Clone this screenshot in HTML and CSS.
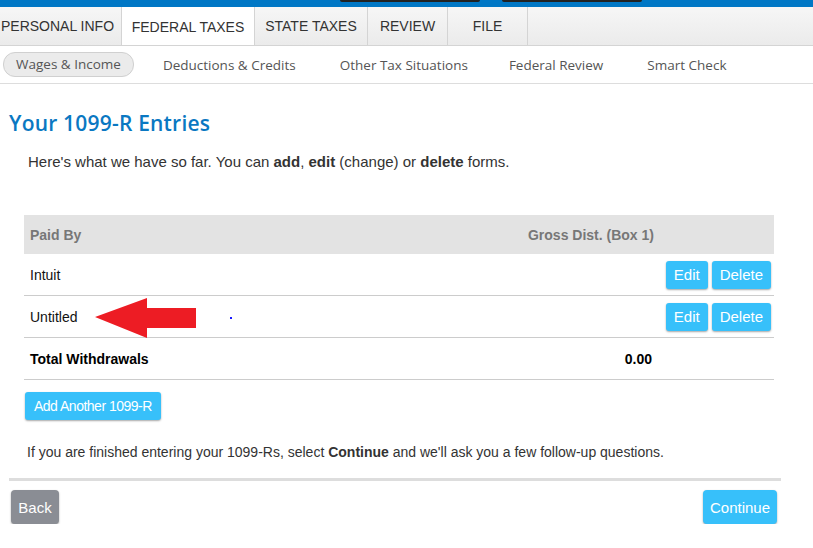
FILE: index.html
```html
<!DOCTYPE html>
<html>
<head>
<meta charset="utf-8">
<link rel="stylesheet" href="styles.css">
</head>
<body>
<div class="topbar">
  <span class="topbtn topbtn-a"></span>
  <span class="topbtn topbtn-b"></span>
</div>
<nav class="tabs">
  <div class="tab tab-first">PERSONAL INFO</div>
  <div class="tab active">FEDERAL TAXES</div>
  <div class="tab tab-state">STATE TAXES</div>
  <div class="tab">REVIEW</div>
  <div class="tab">FILE</div>
</nav>
<nav class="subnav">
  <span class="sub pill">Wages &amp; Income</span>
  <span class="sub">Deductions &amp; Credits</span>
  <span class="sub sub-other">Other Tax Situations</span>
  <span class="sub">Federal Review</span>
  <span class="sub">Smart Check</span>
</nav>
<main class="content">
  <h1 class="title">Your 1099-R Entries</h1>
  <p class="intro">Here's what we have so far. You can <b>add</b>, <b>edit</b> (change) or <b>delete</b> forms.</p>
  <div class="table">
    <div class="row head">
      <div class="c-name">Paid By</div>
      <div class="c-amt">Gross Dist. (Box 1)</div>
      <div class="c-act"></div>
    </div>
    <div class="row">
      <div class="c-name">Intuit</div>
      <div class="c-amt"></div>
      <div class="c-act"><button class="btn">Edit</button><button class="btn">Delete</button></div>
    </div>
    <div class="row">
      <div class="c-name untitled">Untitled
        <svg class="arrow" width="102" height="42" viewBox="0 0 102 42"><polygon points="0,20 52,1 52,11 101,11 101,31 52,31 52,41" fill="#ed1c24"/></svg>
        <span class="dot"></span>
      </div>
      <div class="c-amt"></div>
      <div class="c-act"><button class="btn">Edit</button><button class="btn">Delete</button></div>
    </div>
    <div class="row total">
      <div class="c-name">Total Withdrawals</div>
      <div class="c-amt">0.00</div>
      <div class="c-act"></div>
    </div>
  </div>
  <button class="btn btn-add">Add Another 1099-R</button>
  <p class="finish">If you are finished entering your 1099-Rs, select <b>Continue</b> and we'll ask you a few follow-up questions.</p>
  <div class="footer">
    <button class="btn btn-back">Back</button>
    <button class="btn btn-cont">Continue</button>
  </div>
</main>
</body>
</html>
```
FILE: styles.css
```css
* { box-sizing: border-box; }
body {
  margin: 0;
  font-family: "Liberation Sans", Arial, sans-serif;
  color: #333;
  background: #fff;
  width: 813px;
  overflow: hidden;
}
.topbar {
  height: 7px;
  background: #0077c5;
  position: relative;
}
.topbtn {
  position: absolute;
  top: 0;
  height: 2px;
  background: #222;
  border-radius: 0 0 4px 4px;
}
.topbtn-a { left: 340px; width: 140px; }
.topbtn-b { left: 502px; width: 140px; }
.tabs {
  display: flex;
  height: 39px;
  background: linear-gradient(#f6f6f6, #ebebeb);
  border-bottom: 1px solid #d4d4d4;
  overflow: hidden;
}
.tab {
  flex-shrink: 0;
  display: flex;
  align-items: center;
  justify-content: center;
  white-space: nowrap;
  width: 80px;
  font-size: 14px;
  color: #333;
  border-right: 1px solid #d4d4d4;
  height: 38px;
}
.tab-first { margin-left: -6px; width: 128px; }
.tab.active {
  background: #fff;
  height: 39px;
  width: 133px;
}
.tab-state { width: 113px; }
.subnav {
  display: flex;
  align-items: center;
  height: 38px;
  border-bottom: 1px solid #ddd;
  font-family: "Open Sans", sans-serif;
  font-size: 13.5px;
  color: #555;
  white-space: nowrap;
}
.sub { margin-right: 44px; }
.sub-other { margin-right: 41px; }
.pill {
  margin-left: 3px;
  padding: 2px 12px 3px;
  background: #ebebeb;
  border: 1px solid #d0d0d0;
  border-radius: 12px;
  margin-right: 29px;
}
.content { padding: 0 0 0 9px; }
.title {
  margin: 25px 0 0;
  font-family: "Open Sans", sans-serif;
  font-weight: 600;
  font-size: 21px;
  letter-spacing: 0.2px;
  color: #0a78c2;
  line-height: 28px;
}
.intro {
  margin: 16px 0 0 19px;
  font-size: 15px;
  line-height: 18px;
}
.table {
  margin: 44px 0 0 15px;
  width: 750px;
}
.row {
  display: flex;
  align-items: center;
  height: 42px;
  border-bottom: 1px solid #ccc;
  font-size: 14px;
  color: #111;
}
.row.head {
  height: 39px;
  background: #e3e3e3;
  border-bottom: none;
  font-weight: bold;
  color: #777;
}
.c-name { flex: 1; padding-left: 6px; position: relative; }
.c-amt { width: 200px; text-align: right; }
.c-act {
  width: 120px;
  display: flex;
  justify-content: flex-end;
  gap: 4px;
  padding-right: 3px;
}
.total { font-weight: bold; color: #000; }
.total .c-amt { padding-right: 2px; }
.untitled { display: flex; align-items: center; }
.arrow { position: absolute; left: 71px; top: -12px; }
.dot {
  position: absolute;
  left: 206px;
  top: 8px;
  width: 2px;
  height: 2px;
  background: #1a1aff;
}
.btn {
  border: none;
  background: #37c0fa;
  color: #fff;
  font-family: "Liberation Sans", Arial, sans-serif;
  font-size: 15px;
  height: 28px;
  padding: 0 8px;
  border-radius: 3px;
  box-shadow: 0 1px 2px rgba(0,0,0,0.35);
}
.btn-add {
  margin: 12px 0 0 16px;
  padding: 0 9px;
  font-size: 14px;
  letter-spacing: -0.5px;
}
.finish {
  margin: 23px 0 0 18px;
  font-size: 14px;
  line-height: 18px;
}
.footer {
  display: flex;
  justify-content: space-between;
  align-items: flex-start;
  width: 772px;
  margin-top: 17px;
  border-top: 3px solid #ddd;
  padding: 9px 4px 0 2px;
}
.btn-back {
  background: #8a8d94;
  height: 34px;
  width: 48px;
  padding: 0;
  border-radius: 4px;
}
.btn-cont {
  height: 34px;
  width: 74px;
  padding: 0;
  border-radius: 4px;
}
```
